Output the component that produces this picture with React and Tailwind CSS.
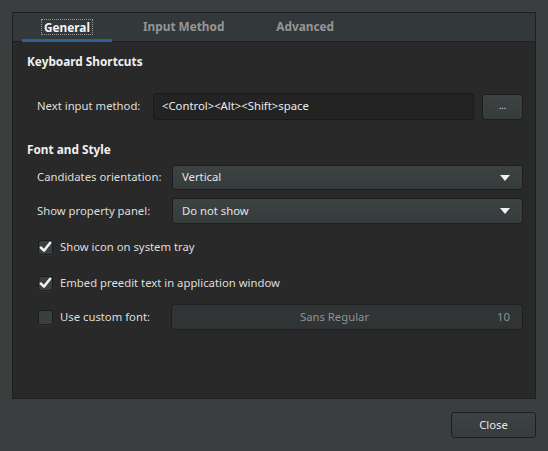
import React from 'react';

const font = { fontFamily: '"Noto Sans", "Open Sans", sans-serif' };

function Check({ checked }) {
  return (
    <div className="shrink-0 w-[15px] h-[15px] rounded-[3px] bg-[#3a3f40] border border-[#1c1d1d] flex items-center justify-center shadow-[0_1px_0_#333]">
      {checked && (
        <svg width="13" height="12" viewBox="0 0 13 12">
          <path d="M1.8 6.5 L5 9.6 L11.2 1.8" fill="none" stroke="#f2f2f2" strokeWidth="2.5" strokeLinecap="round" strokeLinejoin="round" />
        </svg>
      )}
    </div>
  );
}

function Combo({ value, tall }) {
  return (
    <div className={`flex-1 ${tall ? 'h-[26px]' : 'h-[25px]'} rounded-[3px] border border-[#1d1e1e] bg-gradient-to-b from-[#3d4243] to-[#363b3c] flex items-center justify-between pl-[9px] pr-[12px] text-[#e4e4e4]`}>
      <span>{value}</span>
      <svg width="10" height="6" viewBox="0 0 10 6">
        <path d="M0 0 H10 L5 6 Z" fill="#f0f0f0" />
      </svg>
    </div>
  );
}

export default function App() {
  return (
    <div className="w-[548px] h-[451px] bg-[#3a3e3f] text-[11.3px] text-[#dedede] overflow-hidden whitespace-nowrap" style={font}>
      <div className="pt-[12px] pl-[12px]">
        <div className="w-[524px] h-[387px] border border-[#1e1f1f] bg-[#292929] flex flex-col">
          <div className="h-[29px] shrink-0 bg-[#33383a] border-b border-[#1e1f1f] flex items-stretch text-[11.8px] font-bold">
            <div className="ml-[9px] w-[90px] flex flex-col items-center justify-center relative">
              <span className="px-[2px] border border-dotted border-[#9a9a9a] text-[#f4f4f4] leading-[14px]">General</span>
              <div className="absolute left-0 right-0 bottom-[-1px] h-[3px] bg-[#2f5f97]"></div>
            </div>
            <div className="ml-[31px] flex items-center text-[#969696]">Input Method</div>
            <div className="ml-[52px] flex items-center text-[#969696]">Advanced</div>
          </div>

          <div className="flex flex-col pl-[14px] pr-[12px]">
            <div className="mt-[10px] h-[20px] flex items-center font-bold text-[11.8px] text-[#f0f0f0]">Keyboard Shortcuts</div>

            <div className="mt-[21px] h-[27px] flex items-center pl-[10px]">
              <span className="shrink-0 w-[116px]">Next input method:</span>
              <div className="shrink-0 w-[321px] h-[27px] rounded-[3px] bg-[#232323] border border-[#1a1a1a] flex items-center pl-[8px] text-[#ececec]">
                &lt;Control&gt;&lt;Alt&gt;&lt;Shift&gt;space
              </div>
              <div className="shrink-0 ml-[8px] w-[41px] h-[26px] rounded-[3px] border border-[#1d1e1e] bg-gradient-to-b from-[#3d4243] to-[#363b3c] flex items-center justify-center text-[9px] text-[#e4e4e4] pb-[2px]">
                ...
              </div>
            </div>

            <div className="mt-[20px] h-[20px] flex items-center font-bold text-[11.8px] text-[#f0f0f0]">Font and Style</div>

            <div className="mt-[5px] flex items-center pl-[10px]">
              <span className="shrink-0 w-[135px]">Candidates orientation:</span>
              <Combo value="Vertical" />
            </div>

            <div className="mt-[8px] flex items-center pl-[10px]">
              <span className="shrink-0 w-[135px]">Show property panel:</span>
              <Combo value="Do not show" tall />
            </div>

            <div className="mt-[12px] h-[22px] flex items-center pl-[11px] gap-[7px]">
              <Check checked />
              <span>Show icon on system tray</span>
            </div>

            <div className="mt-[14px] h-[22px] flex items-center pl-[11px] gap-[7px]">
              <Check checked />
              <span>Embed preedit text in application window</span>
            </div>

            <div className="mt-[10px] h-[26px] flex items-center pl-[11px]">
              <Check />
              <span className="shrink-0 ml-[7px] w-[111px]">Use custom font:</span>
              <div className="flex-1 h-[26px] rounded-[3px] border border-[#1d1e1e] bg-[#303435] flex items-center text-[#8f9293]">
                <span className="flex-1 text-center">Sans Regular</span>
                <span className="pr-[12px]">10</span>
              </div>
            </div>
          </div>
        </div>
      </div>
      <div className="flex justify-end w-[536px] mt-[13px]">
        <div className="w-[85px] h-[26px] rounded-[3px] border border-[#1d1e1e] bg-gradient-to-b from-[#3d4243] to-[#363b3c] flex items-center justify-center text-[#e8e8e8]">
          Close
        </div>
      </div>
    </div>
  );
}
